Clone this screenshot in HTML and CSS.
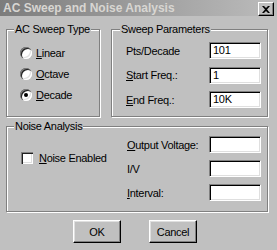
FILE: index.html
```html
<!DOCTYPE html>
<html>
<head>
<meta charset="utf-8">
<link rel="stylesheet" href="styles.css">
</head>
<body>
<div class="window">
  <div class="titlebar">
    <span class="title">AC Sweep and Noise Analysis</span>
    <span class="close"><svg width="8" height="7" viewBox="0 0 8 7"><path d="M0 0 L2 0 L4 2 L6 0 L8 0 L5 3.5 L8 7 L6 7 L4 5 L2 7 L0 7 L3 3.5 Z" fill="#000"/></svg></span>
  </div>
  <div class="content">
    <div class="top-row">
      <div class="group group-type">
        <span class="group-title">AC Sweep Type</span>
        <div class="radios">
          <div class="opt"><span class="radio"></span><span><u>L</u>inear</span></div>
          <div class="opt"><span class="radio"></span><span><u>O</u>ctave</span></div>
          <div class="opt"><span class="radio checked"></span><span><u>D</u>ecade</span></div>
        </div>
      </div>
      <div class="group group-params">
        <span class="group-title title-params">Sweep Parameters</span>
        <div class="fields fields-params">
          <span class="lbl">Pts/Decade</span><span class="field">101</span>
          <span class="lbl"><u>S</u>tart Freq.:</span><span class="field">1</span>
          <span class="lbl"><u>E</u>nd Freq.:</span><span class="field">10K</span>
        </div>
      </div>
    </div>
    <div class="group group-noise">
      <span class="group-title">Noise Analysis</span>
      <div class="noise-left">
        <div class="opt"><span class="check"></span><span><u>N</u>oise Enabled</span></div>
      </div>
      <div class="fields fields-noise">
        <span class="lbl"><u>O</u>utput Voltage:</span><span class="field"></span>
        <span class="lbl">I/V</span><span class="field"></span>
        <span class="lbl"><u>I</u>nterval:</span><span class="field"></span>
      </div>
    </div>
    <div class="buttons">
      <span class="btn">OK</span>
      <span class="btn">Cancel</span>
    </div>
  </div>
</div>
</body>
</html>
```
FILE: styles.css
```css
html, body {
  margin: 0;
  padding: 0;
  background: #c0c0c0;
}
.window {
  width: 277px;
  height: 250px;
  background: #c0c0c0;
  font-family: "Liberation Sans", Arial, sans-serif;
  font-size: 11px;
  letter-spacing: -0.3px;
  color: #000;
  overflow: hidden;
}
.titlebar {
  height: 16px;
  display: flex;
  align-items: center;
  justify-content: space-between;
  padding: 0 3px 0 3px;
  background: linear-gradient(90deg, #7c7c7c 0%, #a0a0a0 55%, #bcbcbc 100%);
}
.title {
  font-weight: bold;
  font-size: 12px;
  letter-spacing: 0;
  color: #d8d6d2;
  line-height: 16px;
}
.close {
  width: 14px;
  height: 12px;
  margin-top: 2px;
  display: flex;
  align-items: center;
  justify-content: center;
  background: #c0c0c0;
  border: 1px solid;
  border-color: #fff #000 #000 #fff;
  box-shadow: inset -1px -1px 0 #808080;
}
.close svg { display: block; }
.content {
  padding: 13px 9px 0 6px;
}
.top-row {
  display: flex;
  gap: 11px;
}
.group {
  position: relative;
  box-sizing: border-box;
  border: 1px solid #808080;
  box-shadow: inset 1px 1px 0 #fff, 1px 1px 0 #fff;
}
.group-title {
  position: absolute;
  top: -7px;
  left: 7px;
  padding: 0 1px;
  line-height: 13px;
  background: #c0c0c0;
  white-space: nowrap;
}
.title-params { left: 8px; }
.group-type {
  width: 94px;
  height: 88px;
}
.group-params {
  width: 157px;
  height: 88px;
}
.radios {
  display: flex;
  flex-direction: column;
  padding: 12px 0 0 13px;
}
.opt {
  height: 21px;
  display: flex;
  align-items: center;
  gap: 4px;
  white-space: nowrap;
}
.radio {
  position: relative;
  width: 12px;
  height: 12px;
  border-radius: 50%;
  background: #fff;
  box-shadow: inset 1px 1px 0 #808080, inset 2px 2px 0 #202020, inset -1px -1px 0 #fff, inset -2px -2px 0 #dfdfdf;
}
.radio.checked::after {
  content: "";
  position: absolute;
  left: 4px;
  top: 4px;
  width: 4px;
  height: 4px;
  border-radius: 50%;
  background: #000;
}
.fields {
  display: grid;
  grid-template-columns: 1fr 52px;
  align-items: center;
}
.fields-params {
  padding: 12px 6px 0 14px;
  grid-auto-rows: 17px;
  row-gap: 7.5px;
}
.lbl {
  white-space: nowrap;
}
.field {
  box-sizing: border-box;
  height: 17px;
  padding: 0 3px;
  line-height: 15px;
  background: #fff;
  border: 1px solid;
  border-color: #808080 #fff #fff #808080;
  box-shadow: inset 1px 1px 0 #000, inset -1px -1px 0 #dfdfdf;
  white-space: nowrap;
}
.group-noise {
  margin-top: 9px;
  width: 262px;
  height: 86px;
  display: flex;
}
.noise-left {
  width: 120px;
  padding: 19px 0 0 14px;
  box-sizing: border-box;
}
.check {
  width: 12px;
  height: 12px;
  background: #fff;
  box-shadow: inset 1px 1px 0 #808080, inset 2px 2px 0 #202020, inset -1px -1px 0 #fff, inset -2px -2px 0 #dfdfdf;
}
.noise-left .opt { gap: 6px; height: 24px; }
.fields-noise {
  flex: 1;
  padding: 9px 6px 0 0;
  grid-auto-rows: 17px;
  row-gap: 7px;
}
.buttons {
  display: flex;
  gap: 28px;
  margin-top: 8px;
  padding-left: 67px;
}
.btn {
  box-sizing: border-box;
  width: 48px;
  height: 23px;
  display: flex;
  align-items: center;
  justify-content: center;
  border: 1px solid;
  border-color: #fff #000 #000 #fff;
  box-shadow: inset -1px -1px 0 #808080, inset 1px 1px 0 #dfdfdf;
}
```
